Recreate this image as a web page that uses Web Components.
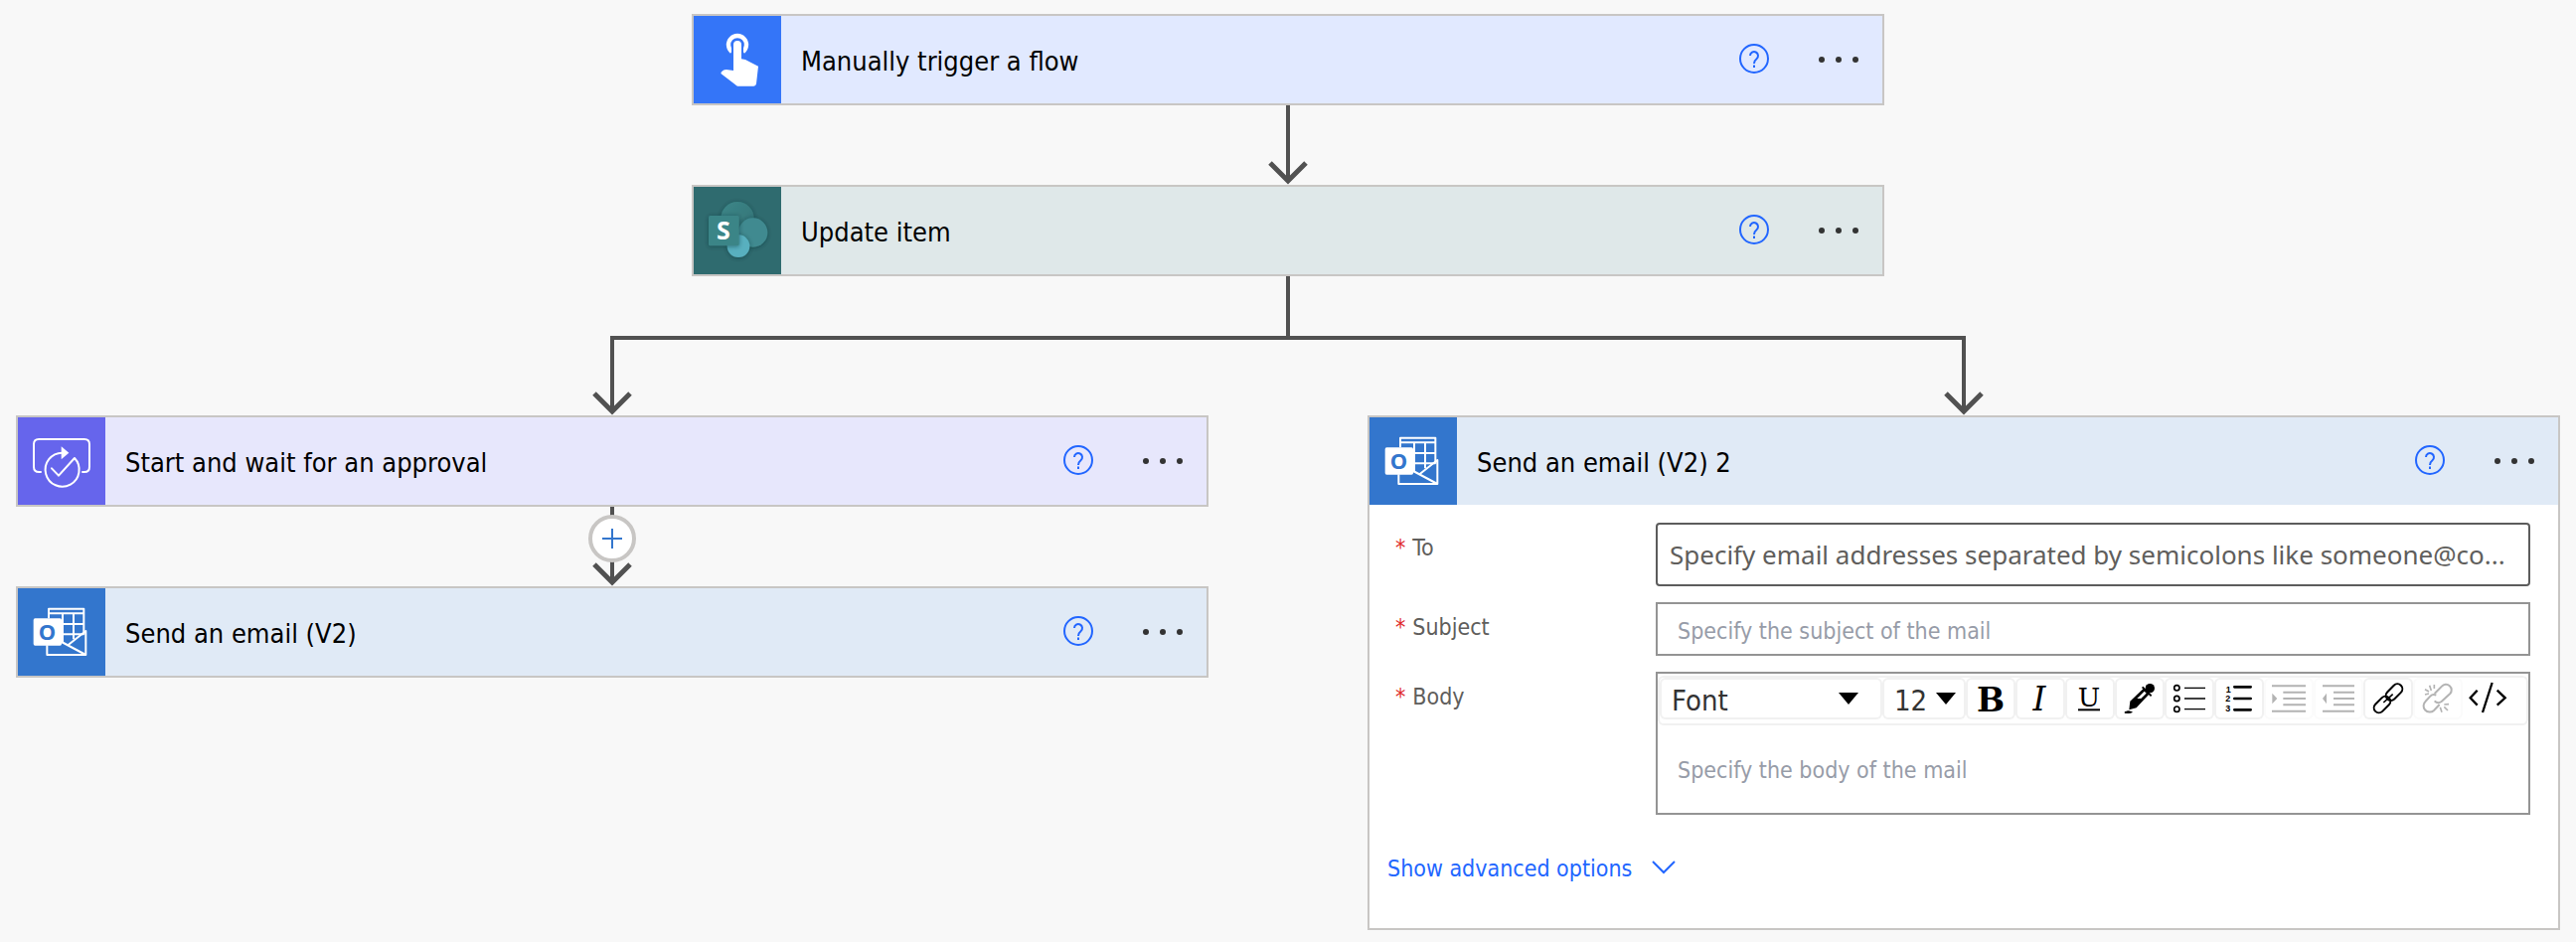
<!DOCTYPE html>
<html lang="en">
<head>
<meta charset="utf-8">
<meta name="viewport" content="width=device-width, initial-scale=1">
<title>Flow designer</title>
<style>
  :root {
    --line: #515151;
    --edge: #c8c6c4;
    --link: #2266ff;
    --branch-gap: 160px;
  }
  body {
    margin: 0;
    background: #f8f8f8;
    color: #000;
    font-family: "DejaVu Sans Condensed", "DejaVu Sans", Tahoma, sans-serif;
  }
</style>
</head>
<body>
<flow-canvas>
  <flow-card slot="trunk" icon="touch" style="--tile:#3475f8;--tint:#e1e9ff">Manually trigger a flow</flow-card>
  <flow-arrow slot="trunk"></flow-arrow>
  <flow-card slot="trunk" icon="sharepoint" style="--tile:#2f6b6f;--tint:#dfe8e9">Update item</flow-card>
  <flow-branch slot="left">
    <flow-card icon="approval" style="--tile:#6665ec;--tint:#e7e7fc">Start and wait for an approval</flow-card>
    <flow-arrow insert></flow-arrow>
    <flow-card icon="outlook" style="--tile:#3376cd;--tint:#e0eaf6">Send an email (V2)</flow-card>
  </flow-branch>
  <flow-branch slot="right">
    <flow-card icon="outlook" style="--tile:#3376cd;--tint:#e0eaf6">Send an email (V2) 2
      <email-form slot="body"></email-form>
    </flow-card>
  </flow-branch>
</flow-canvas>

<script>
const tileIcons = {
  touch: `
    <path d="M121 114A27 27 0 1 1 155 114" fill="none" stroke="#fff" stroke-width="13"/>
    <path d="M120 140V93a18 18 0 0 1 36 0v47z" fill="var(--tile)"/>
    <path d="M126 93a12 12 0 0 1 24 0v43l12 2 39 20-6 53q-1 7-8 7h-48q-4 0-7-4l-43-33q-2-3 1-6 6-7 14-7l22 3z" fill="#fff"/>`,
  sharepoint: `
    <defs>
      <linearGradient id="g" x1="0" y1="0" x2="1" y2="1"><stop stop-color="#3c8789"/><stop offset="1" stop-color="#337174"/></linearGradient>
      <filter id="s" x="-30%" y="-30%" width="160%" height="160%"><feDropShadow dx="0" dy="2" stdDeviation="6" flood-color="#0b3236" flood-opacity=".55"/></filter>
    </defs>
    <g filter="url(#s)"><circle cx="138" cy="101" r="50" fill="url(#g)"/></g>
    <g filter="url(#s)"><circle cx="185" cy="144" r="44" fill="#3f8a90"/></g>
    <g filter="url(#s)"><circle cx="141" cy="185" r="34" fill="#58b0bf"/></g>
    <rect x="51" y="93" width="92" height="91" rx="5" fill="#3b8587" filter="url(#s)"/>
    <text x="96" y="165" text-anchor="middle" font-family="Noto Sans" font-weight="700" font-size="75" fill="#fff">S</text>`,
  approval: `
    <g fill="none" stroke="#fff" stroke-width="6" stroke-linecap="round" stroke-linejoin="round">
      <path d="M75 171h-5q-16 0-16-16V87q0-15 15-15h138q15 0 15 15v68q0 16-15 16h-6"/>
      <path d="M140 113A51 51 0 1 0 177 129L129 182 108 160"/>
    </g>
    <path d="M137 94l23 19-23 20z" fill="#fff"/>`,
  outlook: `
    <g fill="none" stroke="#fff" stroke-width="6" stroke-linejoin="round">
      <path d="M99 97V68h106v78M99 82h106M141 82v90M174 82v78M136 114h69M136 145h69"/>
      <path d="M94 178v29h117v-72l-53 42M138 168l73 39"/>
    </g>
    <rect x="53" y="97" width="85" height="82" rx="5" fill="#fff"/>
    <text x="94" y="162" text-anchor="middle" font-family="Noto Sans" font-weight="700" font-size="66" fill="#3376cd">O</text>`
};

function define(name, html, setup) {
  const t = document.createElement('template');
  t.innerHTML = html;
  customElements.define(name, class extends HTMLElement {
    constructor() {
      super();
      this.attachShadow({ mode: 'open' }).append(t.content.cloneNode(true));
    }
    connectedCallback() { if (setup) setup(this, this.shadowRoot); }
  });
}

/* Designer surface: a centred trunk that splits into two parallel branches */
define('flow-canvas', `
  <style>
    :host { display: block; padding: 14px 16px 12px; }
    .trunk { display: flex; flex-direction: column; width: calc((100% - var(--branch-gap)) / 2); margin: 0 auto; }
    .stem { width: 4px; height: 60px; margin: 0 auto; background: var(--line); }
    .rail { height: 4px; margin: 0 calc((100% - var(--branch-gap)) / 4 - 2px); background: var(--line); }
    .branches { display: grid; grid-template-columns: 1fr 1fr; column-gap: var(--branch-gap); align-items: start; }
    flow-arrow { --length: 76px; }
  </style>
  <div class="trunk"><slot name="trunk"></slot></div>
  <div class="stem"></div>
  <div class="rail"></div>
  <div class="branches">
    <div><flow-arrow></flow-arrow><slot name="left"></slot></div>
    <div><flow-arrow></flow-arrow><slot name="right"></slot></div>
  </div>`);

define('flow-branch', `
  <style>:host { display: flex; flex-direction: column; }</style>
  <slot></slot>`);

/* Connector with an optional "insert a step" button lying over it */
define('flow-arrow', `
  <style>
    :host { display: flex; flex-direction: column; align-items: center; height: var(--length, 80px); position: relative; }
    .shaft { width: 4px; flex: 1; background: var(--line); }
    svg { display: block; margin-top: -20px; }
    button {
      position: absolute; top: 8px; left: calc(50% - 24px); width: 48px; height: 48px; padding: 0;
      display: grid; place-items: center; border: 4px solid var(--edge); border-radius: 50%; background: #fff;
    }
    button svg { margin: 0; }
    :host(:not([insert])) button { display: none; }
  </style>
  <div class="shaft"></div>
  <svg width="40" height="24" fill="none" stroke="var(--line)" stroke-width="5"><path d="M2 2l18 18L38 2"/></svg>
  <button aria-label="Insert a new step"><svg width="22" height="22" stroke="#3376cd" stroke-width="2"><path d="M1 11h20M11 1v20"/></svg></button>`);

define('flow-card', `
  <style>
    :host { display: block; border: 2px solid var(--edge); background: #fff; }
    header { display: flex; align-items: center; height: 88px; background: var(--tint); }
    .tile { width: 88px; height: 88px; flex: none; background: var(--tile); }
    h2 { flex: 1; margin: 0; padding: 4px 0 0 20px; font-size: 27px; line-height: 36px; font-weight: 400; }
    button { padding: 0; border: 0; background: none; height: 32px; display: grid; place-items: center; }
    .help { width: 30px; margin-right: 46px; }
    .more { width: 48px; margin-right: 20px; }
    svg { display: block; }
  </style>
  <header>
    <svg class="tile" viewBox="6 6 264 264" aria-hidden="true"></svg>
    <h2><slot></slot></h2>
    <button class="help" aria-label="Help">
      <svg width="30" height="32" fill="none" stroke="var(--link)" stroke-width="2"><circle cx="15" cy="15" r="14"/><path d="M11 12a4 4 0 1 1 6.500 3.200C15.600 16.700 15 17.500 15 20M15 21.500v2.500"/></svg>
    </button>
    <button class="more" aria-label="More commands">
      <svg width="48" height="32" fill="#333"><circle cx="7" cy="16" r="3"/><circle cx="24" cy="16" r="3"/><circle cx="41" cy="16" r="3"/></svg>
    </button>
  </header>
  <slot name="body"></slot>`,
  (el, root) => { root.querySelector('.tile').innerHTML = tileIcons[el.getAttribute('icon')]; });

/* Formatting buttons of the rich text box; each drawing is 150 x 126 units */
const G = '#b3b3b3';
const tools = [
  ['Bold', 954, `<text x="1029" y="153" text-anchor="middle" font-family="DejaVu Serif" font-weight="700" font-size="100">B</text>`],
  ['Italic', 1104, `<text x="1176" y="150" text-anchor="middle" font-family="DejaVu Serif" font-style="italic" font-size="98">I</text>`],
  ['Underline', 1254, `<text x="1326" y="137" text-anchor="middle" font-family="DejaVu Serif" font-size="80">U</text><path d="M1293 148h66" stroke="#000" stroke-width="6"/>`],
  ['Text colour', 54, `<path d="M84 155q10-6 22 0-8 4-22 2z" stroke="#000" stroke-width="3"/><path d="M97 148l3-26 40-38 17 17-38 41z"/><path d="M121 114l22-22 6 6-16 16z" fill="#fff"/><path d="M137 79l27 27" stroke="#000" stroke-width="6"/><circle cx="160" cy="83" r="14"/>`],
  ['Bulleted list', 204, `<g fill="none" stroke="#000" stroke-width="5"><circle cx="241" cy="82" r="8"/><circle cx="241" cy="114" r="8"/><circle cx="241" cy="146" r="8"/><path stroke-width="4" d="M264 82h63M264 114h63M264 146h63"/></g>`],
  ['Numbered list', 354, `<g font-family="Liberation Sans" font-weight="700" font-size="27"><text x="389" y="95">1</text><text x="388" y="124">2</text><text x="388" y="153">3</text></g><path d="M415 79h49M415 114h49M415 148h49" stroke="#000" stroke-width="8" stroke-linecap="round"/>`],
  ['Indent', 504, `<path d="M528 76h102M562 95h68M562 114h68M562 133h68M528 152h102" stroke="${G}" stroke-width="6"/><path d="M529 98l15 16-15 16z" fill="${G}"/>`, 1],
  ['Outdent', 654, `<path d="M681 76h96M714 95h63M714 114h63M714 133h63M681 152h96" stroke="${G}" stroke-width="6"/><path d="M693 98l-12 16 12 16z" fill="${G}"/>`, 1],
  ['Link', 804, `<g fill="none" stroke="#000" stroke-width="6"><rect x="868" y="80" width="58" height="30" rx="15" transform="rotate(-45 897 95)"/><rect x="832" y="117" width="58" height="30" rx="15" transform="rotate(-45 861 132)"/><path d="M865 126l28-25" stroke-width="5"/></g>`],
  ['Unlink', 954, `<g fill="none" stroke="${G}" stroke-width="6"><path d="M1019 99l22-22a15 15 0 0 1 25 22l-26 24q-12 8-21-2"/><path d="M1024 104q-10-5-18 3l-14 15a18 18 0 0 0 25 28l17-18"/><path stroke-width="5" d="M1004 74l5 16M990 86l12 7M990 102l12-3M1018 72v12M1036 140l5 15M1048 139l11 11M1048 132l14-1"/></g>`, 1],
  ['Code view', 1104, `<path d="M1148 89l-21 23 21 22M1193 66l-29 90M1208 89l24 23-24 22" fill="none" stroke="#000" stroke-width="7"/>`, 0, 1]
];

define('rich-toolbar', `
  <style>
    :host { display: flex; height: 46px; border: 2px solid #f1f1f1; border-radius: 6px; }
    .combo { display: grid; align-items: center; height: 42px; }
    .combo > * { grid-area: 1 / 1; }
    .combo svg { justify-self: end; pointer-events: none; }
    .family { width: 224px; }
    .family svg { margin-right: 24px; }
    .size { width: 84px; }
    .size svg { margin-right: 10px; }
    select {
      appearance: none; box-sizing: border-box; width: 100%; height: 42px; padding: 4px 0 0 12px; border: 0;
      background: none; font-family: inherit; font-size: 29px; color: #333;
    }
    select, button { border-radius: 6px; box-shadow: inset 0 0 0 2px #f1f1f1; }
    button { width: 50px; height: 42px; padding: 0; border: 0; background: none; }
    button:disabled { box-shadow: inset 0 0 0 2px #fbfbfb; }
    button.plain { box-shadow: none; }
    button svg { display: block; width: 50px; height: 42px; }
  </style>
  <div class="combo family">
    <select aria-label="Font family"><option>Font</option></select>
    <svg width="20" height="12"><path d="M0 0h20L10 12z"/></svg>
  </div>
  <div class="combo size">
    <select aria-label="Font size"><option>12</option></select>
    <svg width="20" height="12"><path d="M0 0h20L10 12z"/></svg>
  </div>
  ${tools.map(([n, x, art, off, plain]) => `<button aria-label="${n}"${off ? ' disabled' : ''}${plain ? ' class="plain"' : ''}><svg viewBox="${x} 51 150 126">${art}</svg></button>`).join('')}`);

define('form-row', `
  <style>
    :host { display: grid; grid-template-columns: 262px minmax(0, 1fr); align-items: start; }
    label { display: flex; gap: 7px; padding-top: 9px; font-size: 23px; line-height: 32px; color: #605e5c; }
    .star { color: #e02b2b; }
    input, textarea { box-sizing: border-box; display: block; width: 100%; margin: 0; border: 0; border-radius: 0; outline: 0; background: none; font-family: inherit; font-size: 23px; resize: none; }
    input { height: 54px; padding: 4px 20px 0; border: 2px solid #949494; background: #fff; }
    ::placeholder { color: #979ca8; opacity: 1; }
    .wide { height: 64px; padding: 0 12px; border-color: #5c5c5c; border-radius: 4px; font-family: "Noto Sans", "Segoe UI", sans-serif; font-size: 26px; }
    .wide::placeholder { color: #605e5c; }
    .rich { padding: 2px 0 0; border: 2px solid #949494; background: #fff; }
    textarea { height: 88px; padding: 29px 20px 27px; line-height: 32px; overflow: hidden; }
  </style>
  <label for="field"><span class="star">*</span><slot></slot></label>
  <div class="box"></div>`,
  (el, root) => {
    const hint = el.getAttribute('hint'), kind = el.getAttribute('kind'), box = root.querySelector('.box');
    if (kind === 'rich') {
      box.classList.add('rich');
      box.innerHTML = `<rich-toolbar></rich-toolbar><textarea id="field" placeholder="${hint}"></textarea>`;
    } else {
      box.innerHTML = `<input id="field" type="text" class="${kind || ''}" placeholder="${hint}">`;
    }
  });

define('email-form', `
  <style>
    :host { display: block; padding-bottom: 44px; }
    form { display: grid; gap: 16px; padding: 18px 28px 0 26px; }
    a { display: inline-flex; align-items: center; gap: 20px; margin: 38px 0 0 18px; font-size: 23px; line-height: 32px; color: var(--link); text-decoration: none; vertical-align: top; }
  </style>
  <form>
    <form-row kind="wide" hint="Specify email addresses separated by semicolons like someone@co...">To</form-row>
    <form-row hint="Specify the subject of the mail">Subject</form-row>
    <form-row kind="rich" hint="Specify the body of the mail">Body</form-row>
  </form>
  <a href="#advanced">Show advanced options<svg width="24" height="16" fill="none" stroke="currentColor" stroke-width="2"><path d="M1 1l11 11L23 1"/></svg></a>`);
</script>
</body>
</html>
